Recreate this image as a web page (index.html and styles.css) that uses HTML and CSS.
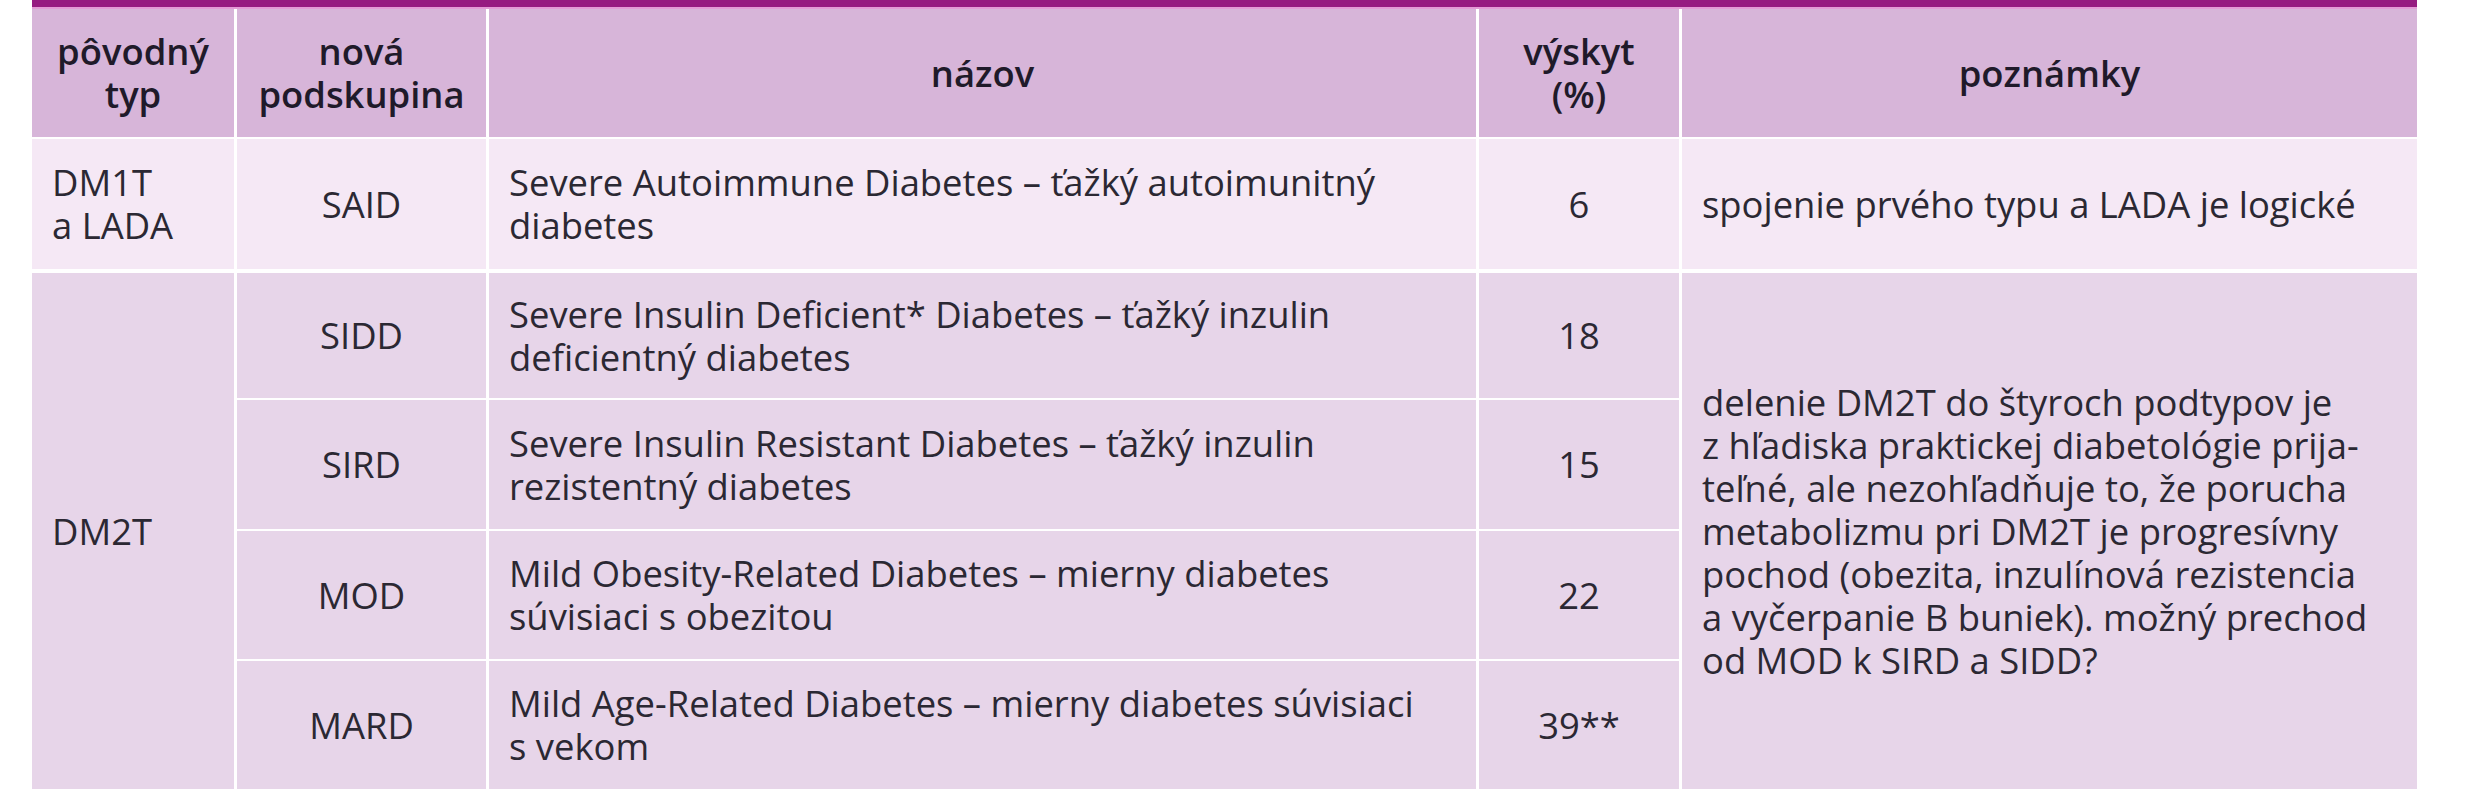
FILE: index.html
```html
<!DOCTYPE html>
<html lang="sk">
<head>
<meta charset="utf-8">
<title>Podskupiny diabetu</title>
<link rel="stylesheet" href="styles.css">
</head>
<body>
<div class="wrap">
  <div class="topbar"></div>
  <div class="topline"></div>
  <table class="dm">
    <colgroup>
      <col class="c1"><col class="c2"><col class="c3"><col class="c4"><col class="c5">
    </colgroup>
    <thead>
      <tr class="rh">
        <th class="b">pôvodný<br>typ</th>
        <th class="b">nová<br>podskupina</th>
        <th class="b">názov</th>
        <th class="b">výskyt<br>(%)</th>
        <th>poznámky</th>
      </tr>
    </thead>
    <tbody>
      <tr class="r1 light">
        <td class="left b">DM1T<br>a LADA</td>
        <td class="center b">SAID</td>
        <td class="left b">Severe Autoimmune Diabetes – ťažký autoimunitný<br>diabetes</td>
        <td class="center b">6</td>
        <td class="left notes">spojenie prvého typu a LADA je logické</td>
      </tr>
      <tr class="r2 dark">
        <td class="left b last" rowspan="4">DM2T</td>
        <td class="center b">SIDD</td>
        <td class="left b">Severe Insulin Deficient* Diabetes – ťažký inzulin<br>deficientný diabetes</td>
        <td class="center b">18</td>
        <td class="left notes last" rowspan="4">delenie DM2T do štyroch podtypov je<br>z hľadiska praktickej diabetológie prija-<br>teľné, ale nezohľadňuje to, že porucha<br>metabolizmu pri DM2T je progresívny<br>pochod (obezita, inzulínová rezistencia<br>a vyčerpanie B buniek). možný prechod<br>od MOD k SIRD a SIDD?</td>
      </tr>
      <tr class="r3 dark">
        <td class="center b">SIRD</td>
        <td class="left b">Severe Insulin Resistant Diabetes – ťažký inzulin<br>rezistentný diabetes</td>
        <td class="center b">15</td>
      </tr>
      <tr class="r4 dark">
        <td class="center b">MOD</td>
        <td class="left b">Mild Obesity-Related Diabetes – mierny diabetes<br>súvisiaci s obezitou</td>
        <td class="center b">22</td>
      </tr>
      <tr class="r5 dark">
        <td class="center b last">MARD</td>
        <td class="left b last">Mild Age-Related Diabetes – mierny diabetes súvisiaci<br>s vekom</td>
        <td class="center b last">39**</td>
      </tr>
    </tbody>
  </table>
</div>
</body>
</html>
```

FILE: styles.css
```css
html, body {
  margin: 0;
  padding: 0;
  background: #ffffff;
}

.wrap {
  margin-left: 32px;
  width: 2385px;
}

.topbar {
  height: 7px;
  background: #961b81;
}

.topline {
  height: 2px;
  background: #e39bd6;
}

.dm {
  width: 2385px;
  table-layout: fixed;
  border-collapse: separate;
  border-spacing: 0;
  font-family: "Open Sans", "Noto Sans", sans-serif;
  font-size: 36.4px;
  line-height: 43px;
  color: #2b2833;
}

.c1 { width: 205px; }
.c2 { width: 252px; }
.c3 { width: 990px; }
.c4 { width: 203px; }
.c5 { width: 735px; }

.dm th,
.dm td {
  padding: 0 20px;
  vertical-align: middle;
  box-sizing: border-box;
}

.dm th {
  background: #d7b5d9;
  font-weight: 600;
  text-align: center;
  color: #1f1a2a;
  border-bottom: 2px solid #ffffff;
}

.dm .b {
  border-right: 3px solid #ffffff;
}

.rh { height: 130px; }
.r1 { height: 134px; }
.r2 { height: 127px; }
.r3 { height: 131px; }
.r4 { height: 130px; }
.r5 { height: 128px; }

.light td {
  background: #f5e8f5;
  border-bottom: 4px solid #ffffff;
}

.dark td {
  background: #e7d5e9;
  border-bottom: 2px solid #ffffff;
}

.dark td.last {
  border-bottom: 0;
}

.left { text-align: left; }
.center { text-align: center; }

.notes {
  padding-left: 22px;
}
```
